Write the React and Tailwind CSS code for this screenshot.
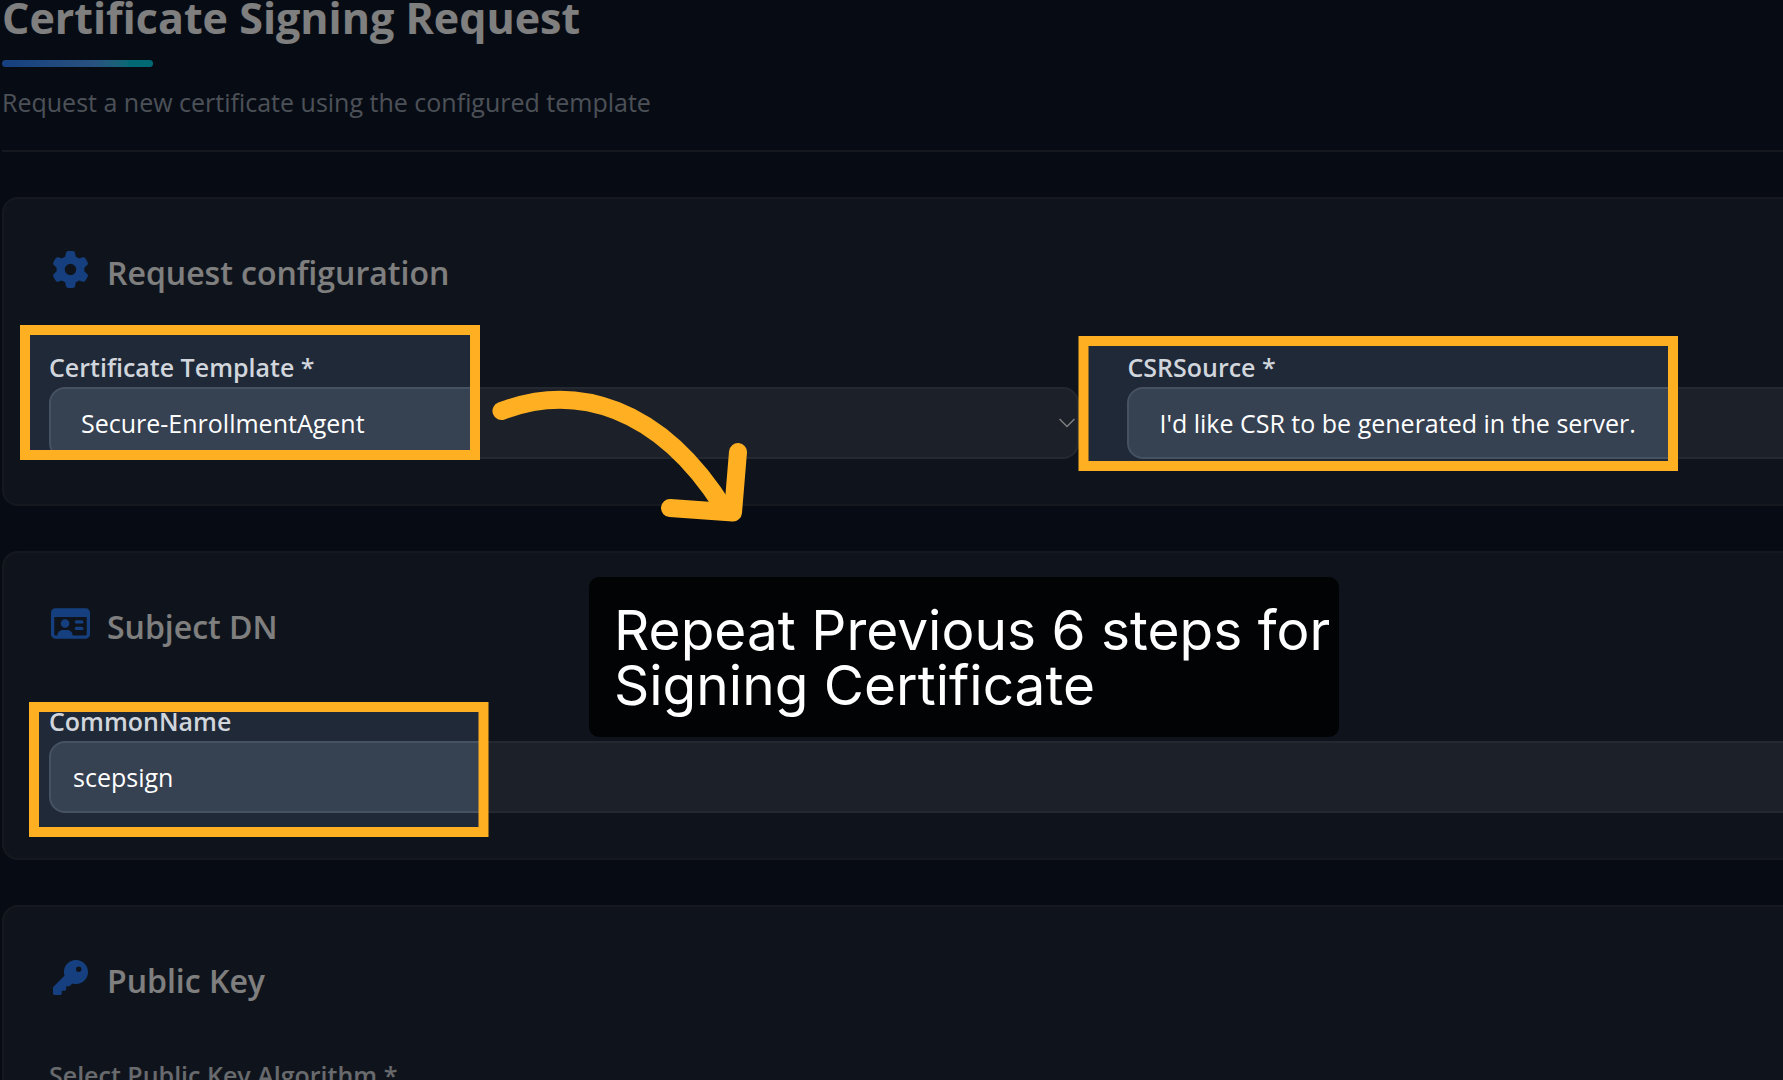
import React from 'react';
import { FaGear, FaKey, FaRegIdCard } from 'react-icons/fa6';

const labelClass = 'block text-[25px] leading-8 font-semibold text-gray-300';
const fieldClass =
  'block h-[72px] w-full rounded-2xl border-2 border-[#465162] bg-[#364152] text-[25px] text-white';

const Section = ({ icon, title, children }) => (
  <section className="h-[309px] rounded-2xl border-2 border-[#2a313d] bg-[#1f2938] px-[45px] pt-[46px]">
    <h2 className="flex h-14 items-center gap-4 text-[32px] font-semibold text-white">
      <span className="flex w-[42px] justify-center pb-2 text-[#2b7fff]">{icon}</span>
      {title}
    </h2>
    <div className="mt-[50px]">{children}</div>
  </section>
);

const ChevronSelect = ({ id, label, value }) => (
  <div>
    <label htmlFor={id} className={labelClass}>{label}</label>
    <div className="relative mt-1">
      <select id={id} defaultValue={value} className={`${fieldClass} appearance-none pt-0.5 pr-12 pl-[30px]`}>
        <option>{value}</option>
      </select>
      <svg viewBox="0 0 16 16" className="pointer-events-none absolute top-7 right-1 h-4 w-4" fill="none" stroke="#ffffff" strokeWidth="1.5">
        <path d="M0.5 4l7.5 7.5 7.5-7.5" />
      </svg>
    </div>
  </div>
);

const App = () => {
  return (
    <div className="relative h-screen overflow-hidden bg-[#0f1829] font-['Open_Sans',sans-serif]">
      <main className="w-[124%] pr-1.5 pl-0.5">
        <header className="h-[152px] border-b-2 border-[#2a313d]">
          <h1 className="h-[60px] text-[43px] leading-9 font-bold text-white">Certificate Signing Request</h1>
          <div className="h-[7px] w-[151px] rounded-full bg-linear-to-r from-[#2b7fff] via-[#50a2ff] via-60% to-[#00d3e9] to-85%"></div>
          <p className="mt-[17px] text-[25px] leading-9 text-gray-400">Request a new certificate using the configured template</p>
        </header>

        <div className="mt-[45px] space-y-[45px]">
          <Section icon={<FaGear size={37} />} title="Request configuration">
            <div className="grid grid-cols-2 gap-12">
              <ChevronSelect id="template" label="Certificate Template *" value="Secure-EnrollmentAgent" />
              <ChevronSelect id="csr-source" label="CSRSource *" value="I'd like CSR to be generated in the server." />
            </div>
          </Section>

          <Section icon={<FaRegIdCard size={39} />} title="Subject DN">
            <label htmlFor="common-name" className={labelClass}>CommonName</label>
            <input id="common-name" type="text" defaultValue="scepsign" className={`${fieldClass} mt-1 px-[22px]`} />
          </Section>

          <Section icon={<FaKey size={35} />} title="Public Key">
            <label htmlFor="key-algorithm" className={labelClass}>Select Public Key Algorithm *</label>
            <select id="key-algorithm" className={`${fieldClass} mt-1 appearance-none px-7`}>
              <option>RSA</option>
            </select>
          </Section>
        </div>
      </main>

      {/* Dimmed layer with a cut-out for every highlighted field */}
      <svg className="pointer-events-none absolute inset-0 h-full w-full overflow-visible">
        <path
          fill="#000000"
          fillOpacity="0.5"
          fillRule="evenodd"
          d="M0 0H4000V3000H0Z M25 330H475V455H25Z M1083 341H1673V466H1083Z M34 707H484V832H34Z"
        />
        <g fill="none" stroke="#ffb022" strokeWidth="10">
          <path d="M25 330H475V455H25Z" />
          <path d="M1083.5 341H1673V466H1083.5Z" />
          <path d="M34 707H483.5V832H34Z" />
        </g>
        <g fill="none" stroke="#ffb022" strokeWidth="18" strokeLinecap="round" strokeLinejoin="round">
          <path d="M501.5 411C575 383 660 405 725 510" />
          <path d="M738 452L733 512.5L670 508" />
        </g>
      </svg>

      <div className="absolute top-[577px] left-[589px] w-[750px] rounded-[10px] bg-[#020304] pt-[26px] pb-6 pl-[25px] font-['Inter',sans-serif] text-[55px] leading-[55px] whitespace-nowrap text-white">
        <p>Repeat Previous 6 steps for<br />Signing Certificate</p>
      </div>
    </div>
  );
};

export default App;
